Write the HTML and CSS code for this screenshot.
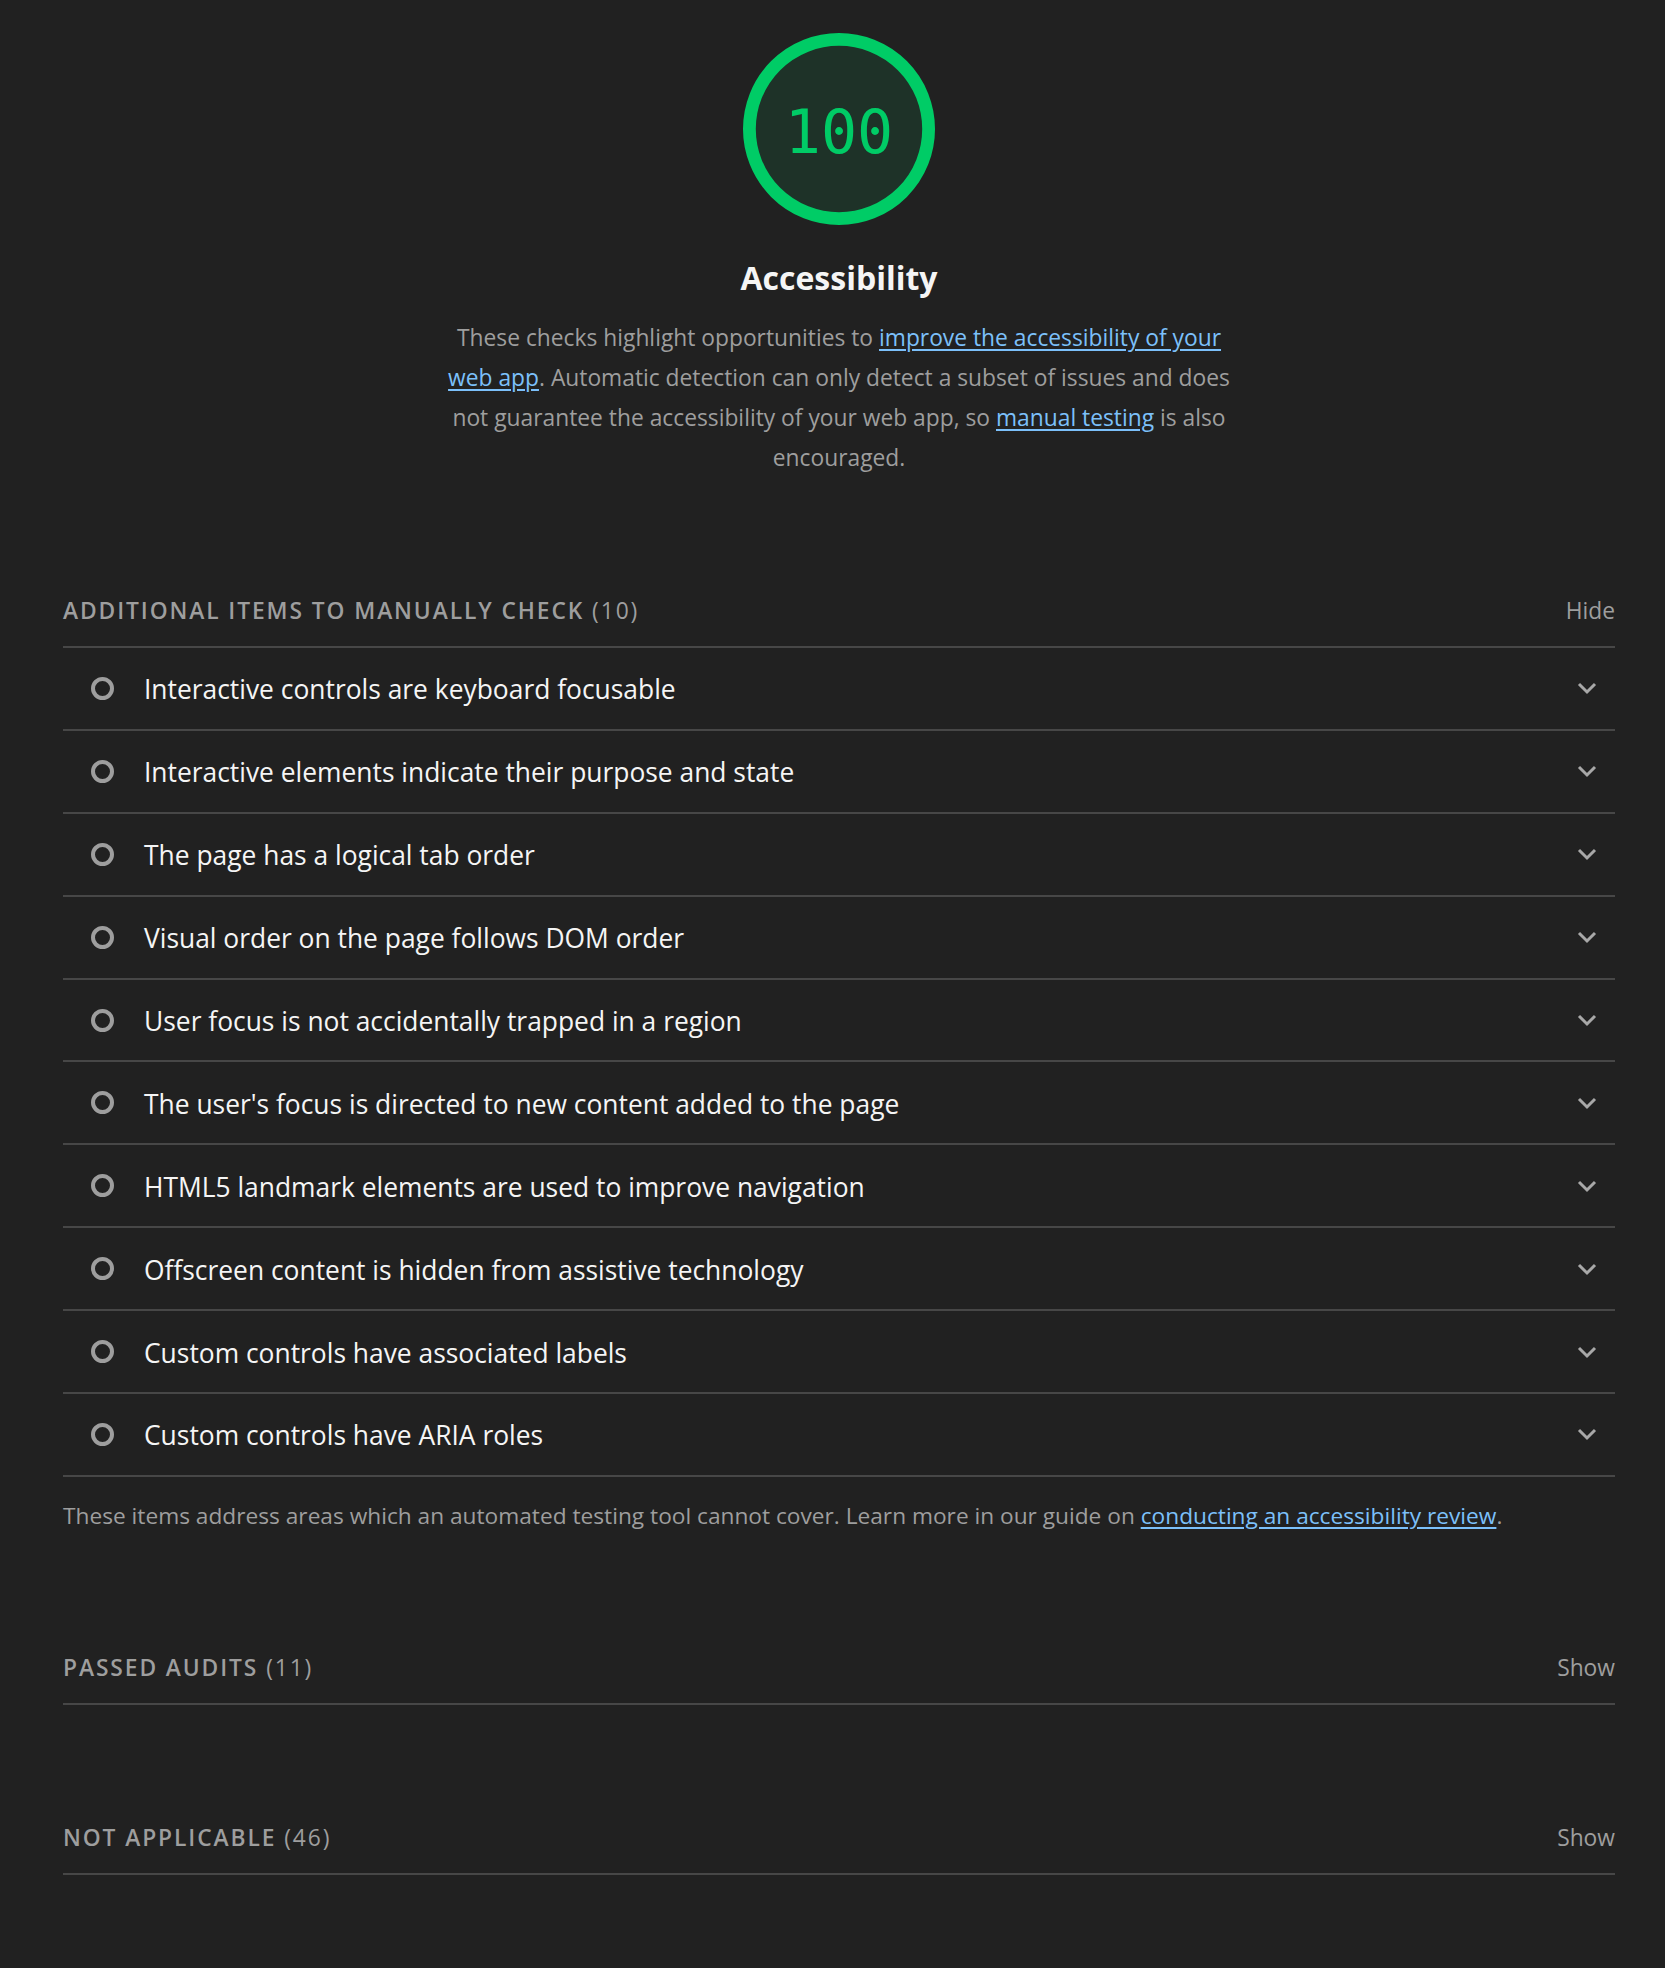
FILE: index.html
```html
<!DOCTYPE html>
<html lang="en">
<head>
<meta charset="utf-8">
<title>Accessibility</title>
<link rel="stylesheet" href="styles.css">
</head>
<body>
<main class="report">
  <header class="cat-header">
    <div class="gauge">
      <svg class="gauge-ring" viewBox="0 0 192 192" width="192" height="192"><circle cx="96" cy="96" r="89.6"></circle></svg>
      <span class="gauge-value">100</span>
    </div>
    <h1 class="cat-title">Accessibility</h1>
    <p class="cat-desc">These checks highlight opportunities to <a href="#">improve the accessibility of your web app</a>. Automatic detection can only detect a subset of issues and does not guarantee the accessibility of your web app, so <a href="#">manual testing</a> is also encouraged.</p>
  </header>

  <section class="group">
    <div class="group-header">
      <span class="group-title"><span class="group-name">Additional items to manually check</span> <span class="group-count">(10)</span></span>
      <span class="toggle">Hide</span>
    </div>
    <ul class="audits">
      <li class="audit"><span class="score-icon"></span><span class="audit-title">Interactive controls are keyboard focusable</span><svg class="chevron" viewBox="0 0 24 16" width="24" height="16"><polyline points="4,4 12,12 20,4"></polyline></svg></li>
      <li class="audit"><span class="score-icon"></span><span class="audit-title">Interactive elements indicate their purpose and state</span><svg class="chevron" viewBox="0 0 24 16" width="24" height="16"><polyline points="4,4 12,12 20,4"></polyline></svg></li>
      <li class="audit"><span class="score-icon"></span><span class="audit-title">The page has a logical tab order</span><svg class="chevron" viewBox="0 0 24 16" width="24" height="16"><polyline points="4,4 12,12 20,4"></polyline></svg></li>
      <li class="audit"><span class="score-icon"></span><span class="audit-title">Visual order on the page follows DOM order</span><svg class="chevron" viewBox="0 0 24 16" width="24" height="16"><polyline points="4,4 12,12 20,4"></polyline></svg></li>
      <li class="audit"><span class="score-icon"></span><span class="audit-title">User focus is not accidentally trapped in a region</span><svg class="chevron" viewBox="0 0 24 16" width="24" height="16"><polyline points="4,4 12,12 20,4"></polyline></svg></li>
      <li class="audit"><span class="score-icon"></span><span class="audit-title">The user's focus is directed to new content added to the page</span><svg class="chevron" viewBox="0 0 24 16" width="24" height="16"><polyline points="4,4 12,12 20,4"></polyline></svg></li>
      <li class="audit"><span class="score-icon"></span><span class="audit-title">HTML5 landmark elements are used to improve navigation</span><svg class="chevron" viewBox="0 0 24 16" width="24" height="16"><polyline points="4,4 12,12 20,4"></polyline></svg></li>
      <li class="audit"><span class="score-icon"></span><span class="audit-title">Offscreen content is hidden from assistive technology</span><svg class="chevron" viewBox="0 0 24 16" width="24" height="16"><polyline points="4,4 12,12 20,4"></polyline></svg></li>
      <li class="audit"><span class="score-icon"></span><span class="audit-title">Custom controls have associated labels</span><svg class="chevron" viewBox="0 0 24 16" width="24" height="16"><polyline points="4,4 12,12 20,4"></polyline></svg></li>
      <li class="audit"><span class="score-icon"></span><span class="audit-title">Custom controls have ARIA roles</span><svg class="chevron" viewBox="0 0 24 16" width="24" height="16"><polyline points="4,4 12,12 20,4"></polyline></svg></li>
    </ul>
    <p class="group-footer">These items address areas which an automated testing tool cannot cover. Learn more in our guide on <a href="#">conducting an accessibility review</a>.</p>
  </section>

  <section class="group">
    <div class="group-header">
      <span class="group-title"><span class="group-name">Passed audits</span> <span class="group-count">(11)</span></span>
      <span class="toggle">Show</span>
    </div>
  </section>

  <section class="group">
    <div class="group-header">
      <span class="group-title"><span class="group-name">Not applicable</span> <span class="group-count">(46)</span></span>
      <span class="toggle">Show</span>
    </div>
  </section>
</main>
</body>
</html>
```

FILE: styles.css
```css
* {
  box-sizing: border-box;
}

html,
body {
  margin: 0;
  padding: 0;
  background: #212121;
}

body {
  min-height: 1968px;
  font-family: "Open Sans", "Noto Sans", sans-serif;
  color: #f5f5f5;
}

.report {
  padding: 33px 50px 0 63px;
}

/* ---------- category header ---------- */
.cat-header {
  display: flex;
  flex-direction: column;
  align-items: center;
}

.gauge {
  display: grid;
  width: 192px;
  height: 192px;
  place-items: center;
}

.gauge > * {
  grid-area: 1 / 1;
}

.gauge-ring circle {
  fill: #1e3228;
  stroke: #00cc66;
  stroke-width: 12.8;
}

.gauge-value {
  padding-top: 5px;
  font-family: "DejaVu Sans Mono", monospace;
  font-size: 60px;
  line-height: 1;
  color: #00cc66;
}

.cat-title {
  margin: 31px 0 0;
  font-size: 32px;
  line-height: 44px;
  font-weight: 700;
  color: #f5f5f5;
}

.cat-desc {
  margin: 18px 0 0;
  width: 800px;
  text-align: center;
  font-size: 22.8px;
  line-height: 40px;
  color: #9e9e9e;
}

a {
  color: #7cc0fa;
  text-decoration: underline;
  text-decoration-thickness: 2px;
  text-underline-offset: 3px;
}

/* ---------- groups ---------- */
.group {
  margin-top: 113px;
}

.group-header {
  display: flex;
  justify-content: space-between;
  align-items: baseline;
  padding-bottom: 15px;
  border-bottom: 2px solid #474747;
  font-size: 22.8px;
  line-height: 40px;
  color: #9e9e9e;
}

.group-title {
  letter-spacing: 1.9px;
  text-transform: uppercase;
}

.group-name {
  font-weight: 600;
}

.group-count {
  font-weight: 400;
}

.toggle {
  color: #9e9e9e;
  letter-spacing: 0;
}

.audits {
  margin: 0;
  padding: 0;
  list-style: none;
}

.audit {
  display: flex;
  align-items: center;
  height: 82.9px;
  padding: 0 16px 0 28px;
  border-bottom: 2px solid #474747;
}

.score-icon {
  flex: none;
  width: 23px;
  height: 23px;
  margin-right: 30px;
  border: 4px solid #9e9e9e;
  border-radius: 50%;
}

.audit-title {
  flex: 1;
  padding-top: 2px;
  font-size: 26.4px;
  line-height: 36px;
  color: #f5f5f5;
}

.chevron {
  flex: none;
}

.chevron polyline {
  fill: none;
  stroke: #a8a8a8;
  stroke-width: 3;
}

.group-footer {
  margin: 20px 0 0;
  font-size: 22.7px;
  line-height: 38px;
  color: #9e9e9e;
}
```
